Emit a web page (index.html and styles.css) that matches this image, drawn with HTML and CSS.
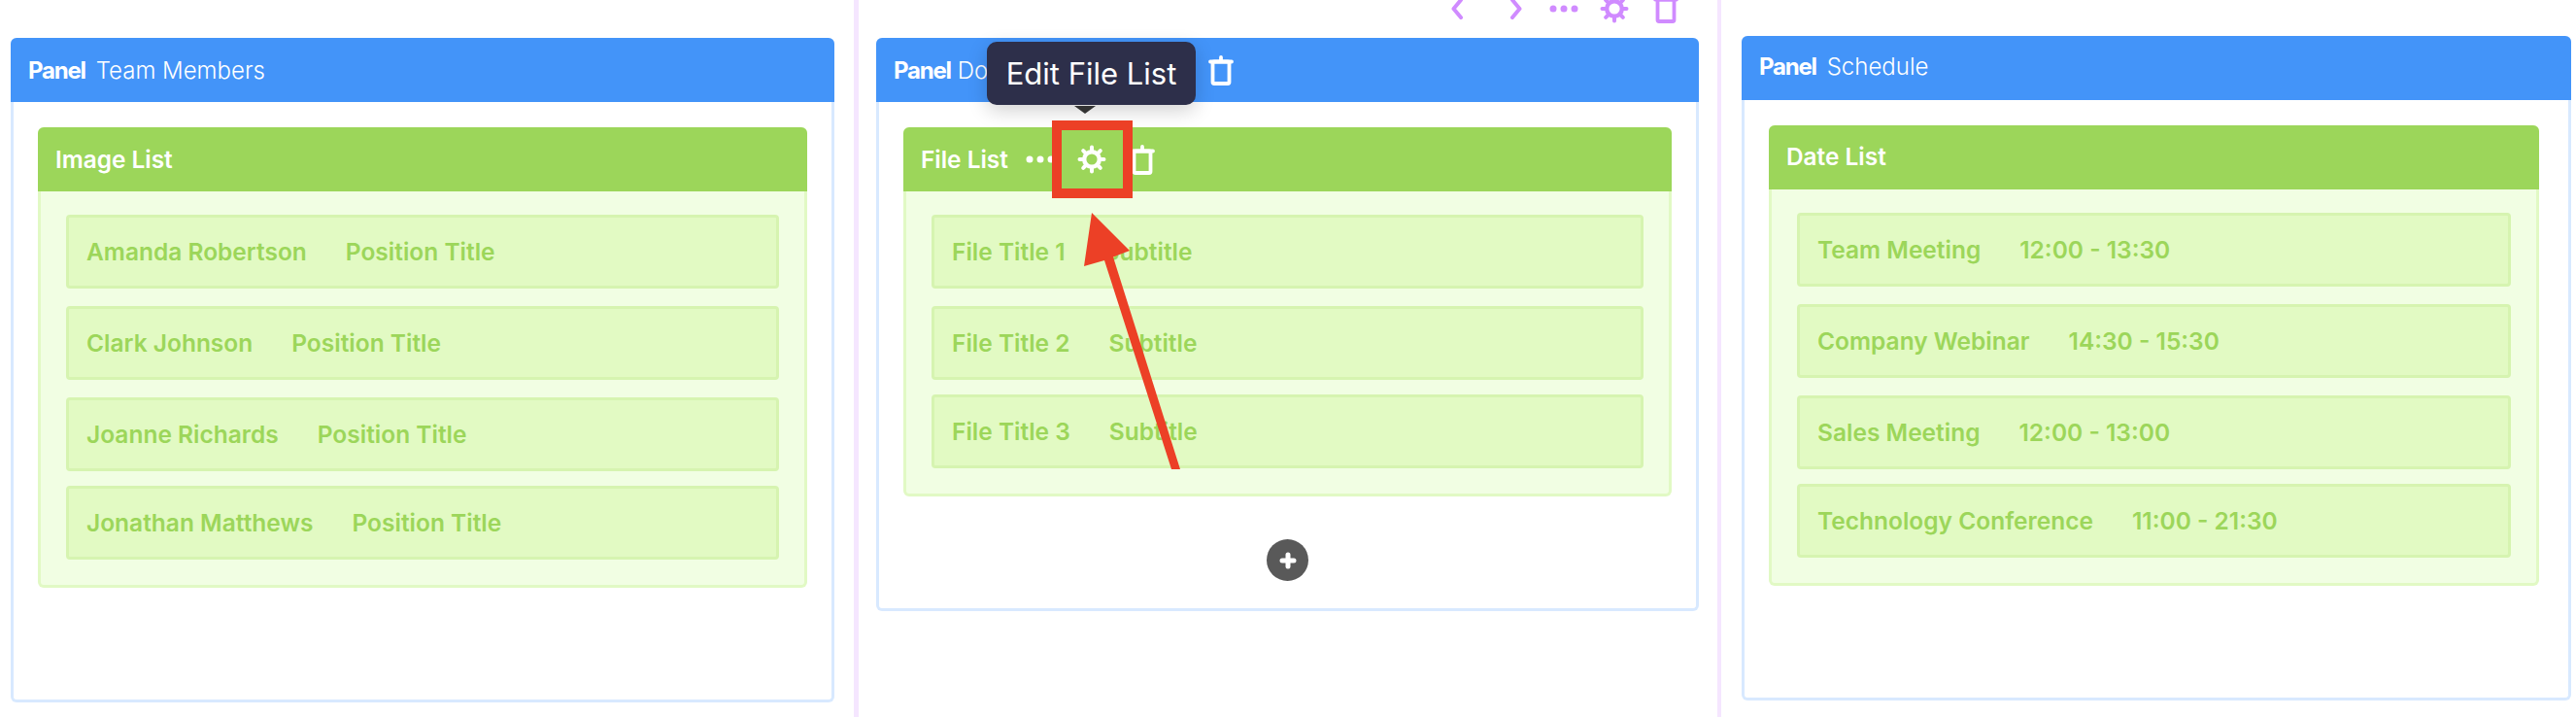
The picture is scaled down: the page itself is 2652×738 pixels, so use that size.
FILE: index.html
```html
<!DOCTYPE html>
<html lang="en">
<head>
    <meta charset="UTF-8">
    <title>Panel Builder</title>
    <link rel="stylesheet" href="styles.css">
</head>
<body>
    <svg class="icon-defs" width="0" height="0">
        <symbol id="gear" viewBox="0 0 30 30">
            <circle cx="15" cy="15" r="7.8" fill="none" stroke="currentColor" stroke-width="4.4"/>
            <g stroke="currentColor" stroke-width="4" stroke-linecap="round">
                <path d="M15 2.5v4M15 23.5v4M2.5 15h4M23.5 15h4M6.2 6.2l2.8 2.8M21 21l2.8 2.8M6.2 23.8l2.8-2.8M21 9l2.8-2.8"/>
            </g>
        </symbol>
        <symbol id="trash" viewBox="0 0 26 31">
            <g fill="none" stroke="currentColor" stroke-width="3.8" stroke-linecap="round" stroke-linejoin="round">
                <path d="M13 2v4M2 6.5h22"/>
                <rect x="4.5" y="6.5" width="17" height="22.5" rx="1.5"/>
            </g>
        </symbol>
        <symbol id="dots" viewBox="0 0 30 8">
            <circle cx="4" cy="4" r="3.5" fill="currentColor"/>
            <circle cx="15" cy="4" r="3.5" fill="currentColor"/>
            <circle cx="26" cy="4" r="3.5" fill="currentColor"/>
        </symbol>
    </svg>

    <div class="columns">
        <!-- Columna izquierda -->
        <section class="col col-left">
            <div class="panel panel-tall">
                <div class="panel-head"><b>Panel</b> Team Members</div>
                <div class="panel-body">
                    <div class="module">
                        <div class="module-head">Image List</div>
                        <div class="module-body">
                            <div class="row"><span>Amanda Robertson</span><span>Position Title</span></div>
                            <div class="row"><span>Clark Johnson</span><span>Position Title</span></div>
                            <div class="row"><span>Joanne Richards</span><span>Position Title</span></div>
                            <div class="row row-tight"><span>Jonathan Matthews</span><span>Position Title</span></div>
                        </div>
                    </div>
                </div>
            </div>
        </section>

        <!-- Columna central -->
        <section class="col col-mid">
            <div class="col-tools">
                <svg class="chevron" viewBox="0 0 12 24"><path d="M10 3 2.5 12 10 21"/></svg>
                <svg class="chevron chevron-next" viewBox="0 0 12 24"><path d="M2 3 9.5 12 2 21"/></svg>
                <svg class="tool-dots"><use href="#dots"/></svg>
                <svg class="tool-gear"><use href="#gear"/></svg>
                <svg class="tool-trash"><use href="#trash"/></svg>
            </div>

            <div class="panel panel-short">
                <div class="panel-head">
                    <span class="panel-title"><b>Panel</b> Documents</span>
                    <svg class="head-trash"><use href="#trash"/></svg>
                </div>
                <div class="panel-body">
                    <div class="module">
                        <div class="module-head">
                            <span>File List</span>
                            <svg class="mod-dots"><use href="#dots"/></svg>
                            <svg class="mod-gear"><use href="#gear"/></svg>
                            <svg class="mod-trash"><use href="#trash"/></svg>
                        </div>
                        <div class="module-body">
                            <div class="row"><span>File Title 1</span><span>Subtitle</span></div>
                            <div class="row"><span>File Title 2</span><span>Subtitle</span></div>
                            <div class="row row-tight"><span>File Title 3</span><span>Subtitle</span></div>
                        </div>
                    </div>
                    <button class="add-button">
                        <svg viewBox="0 0 18 18"><path d="M9 3v12M3 9h12"/></svg>
                    </button>
                </div>
            </div>

            <!-- Tooltip y anotaciones -->
            <div class="tooltip">Edit File List</div>
            <div class="highlight"></div>
            <svg class="callout" viewBox="0 0 120 280" width="120" height="280">
                <path d="M8 0 L47 39 L30 45.5 L99 264 L90 264 L21 49 L0 55 Z"/>
            </svg>
        </section>

        <!-- Columna derecha -->
        <section class="col col-right">
            <div class="panel panel-tall">
                <div class="panel-head"><b>Panel</b> Schedule</div>
                <div class="panel-body">
                    <div class="module">
                        <div class="module-head">Date List</div>
                        <div class="module-body">
                            <div class="row"><span>Team Meeting</span><span>12:00 - 13:30</span></div>
                            <div class="row"><span>Company Webinar</span><span>14:30 - 15:30</span></div>
                            <div class="row"><span>Sales Meeting</span><span>12:00 - 13:00</span></div>
                            <div class="row row-tight"><span>Technology Conference</span><span>11:00 - 21:30</span></div>
                        </div>
                    </div>
                </div>
            </div>
        </section>
    </div>
</body>
</html>
```
FILE: styles.css
```css
/* General */
body {
    margin: 0;
    font-family: Inter, "Noto Sans", sans-serif;
    background-color: #fff;
    overflow: hidden;
}

.icon-defs {
    position: absolute;
}

.columns {
    display: flex;
    height: 738px;
}

/* Columnas */
.col {
    box-sizing: border-box;
    height: 738px;
}

.col-left {
    width: 879px;
    padding: 39px 20px 0 11px;
}

.col-mid {
    position: relative;
    width: 893px;
    padding: 39px 19px 0 18px;
    border-left: 5px solid #f5e6ff;
    border-right: 4px solid #f5e6ff;
}

.col-right {
    flex: 1;
    padding: 37px 5px 0 21px;
}

.col-right .panel-body {
    padding-right: 30px;
}

.col-right .panel-head,
.col-right .module-head {
    padding-bottom: 3px;
}

/* Panel azul */
.panel {
    box-sizing: border-box;
    border: 3px solid #d8e9ff;
    border-top: none;
    border-radius: 6px;
}

.panel-tall {
    height: 684px;
}

.panel-short {
    height: 590px;
}

.panel-head {
    display: flex;
    align-items: center;
    gap: 4px;
    height: 66px;
    margin: 0 -3px;
    padding: 0 18px;
    box-sizing: border-box;
    background-color: #4394f9;
    border-radius: 6px 6px 0 0;
    color: #fff;
    font-size: 24px;
    font-weight: 300;
    white-space: pre-wrap;
}

.panel-head b {
    font-weight: 700;
    letter-spacing: -1.2px;
}

.panel-title {
    width: 320px;
}

.head-trash {
    width: 26px;
    height: 31px;
    color: #fff;
}

.panel-body {
    padding: 26px 25px 0;
}

/* Lista verde */
.module {
    box-sizing: border-box;
    background-color: #f1fee3;
    border: 3px solid #e1f9c4;
    border-top: none;
    border-radius: 6px;
}

.module-head {
    display: flex;
    align-items: center;
    height: 66px;
    margin: 0 -3px;
    padding: 0 18px;
    box-sizing: border-box;
    background-color: #9cd65a;
    border-radius: 6px 6px 0 0;
    color: #fff;
    font-size: 24.4px;
    font-weight: 600;
}

.mod-dots {
    width: 30px;
    height: 8px;
    margin-left: 18px;
    flex: none;
}

.mod-gear {
    width: 30px;
    height: 30px;
    margin-left: 23px;
    flex: none;
}

.mod-trash {
    width: 26px;
    height: 31px;
    margin-left: 24px;
    flex: none;
}

.module-body {
    display: flex;
    flex-direction: column;
    gap: 18px;
    padding: 24px 26px 26px;
}

.row {
    box-sizing: border-box;
    display: flex;
    align-items: center;
    gap: 40px;
    height: 76px;
    padding: 0 18px;
    background-color: #e2fac3;
    border: 3px solid #d6f4b0;
    border-radius: 4px;
    color: #9cd65a;
    font-size: 24.5px;
    font-weight: 600;
}

.row-tight {
    margin-top: -3px;
}

/* Boton de anadir */
.add-button {
    display: flex;
    align-items: center;
    justify-content: center;
    width: 43px;
    height: 43px;
    margin: 44px auto 0;
    padding: 0;
    border: none;
    border-radius: 50%;
    background-color: #595959;
}

.add-button svg {
    width: 18px;
    height: 18px;
}

.add-button path {
    fill: none;
    stroke: #fff;
    stroke-width: 5;
    stroke-linecap: round;
}

/* Herramientas de la columna */
.col-tools {
    position: absolute;
    top: -7px;
    right: 40px;
    display: flex;
    align-items: center;
    height: 31px;
    color: #d08bff;
}

.chevron {
    width: 12px;
    height: 24px;
}

.chevron path {
    fill: none;
    stroke: #d08bff;
    stroke-width: 4;
    stroke-linecap: round;
    stroke-linejoin: round;
}

.chevron-next {
    margin-left: 49px;
}

.tool-dots {
    width: 30px;
    height: 8px;
    margin-left: 28px;
}

.tool-gear {
    width: 30px;
    height: 30px;
    margin-left: 22px;
}

.tool-trash {
    width: 26px;
    height: 31px;
    margin-left: 25px;
}

/* Tooltip */
.tooltip {
    position: absolute;
    left: 132px;
    top: 43px;
    width: 215px;
    height: 65px;
    display: flex;
    align-items: center;
    justify-content: center;
    background-color: #2d2f4a;
    border-radius: 10px;
    color: #fff;
    font-size: 31px;
    box-shadow: 0 6px 20px rgba(0, 0, 0, 0.18);
}

.tooltip::after {
    content: "";
    position: absolute;
    left: 90px;
    top: 66px;
    border-left: 11px solid transparent;
    border-right: 11px solid transparent;
    border-top: 8px solid #333;
}

/* Anotaciones rojas */
.highlight {
    position: absolute;
    left: 199px;
    top: 124px;
    width: 83px;
    height: 80px;
    box-sizing: border-box;
    border: 10px solid #ec4026;
}

.callout {
    position: absolute;
    left: 232px;
    top: 219px;
}

.callout path {
    fill: #ec4026;
}
```
